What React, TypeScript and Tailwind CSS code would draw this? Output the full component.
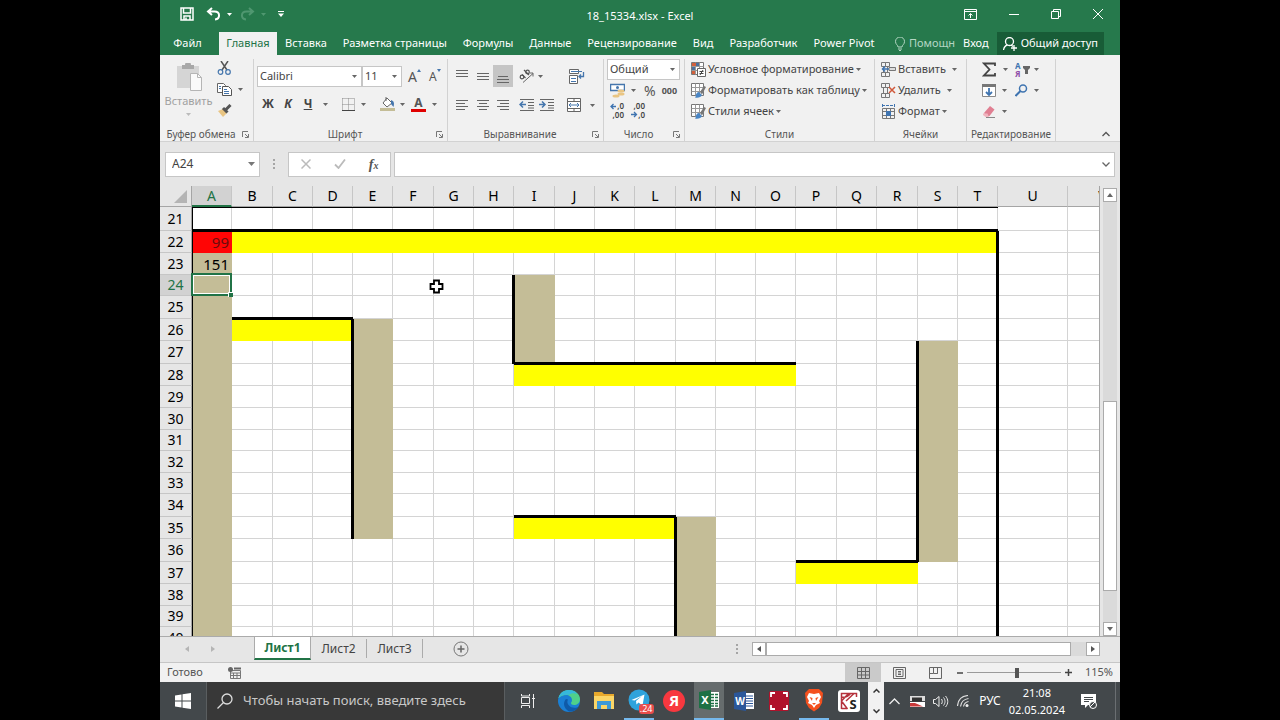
import React from 'react';

type Children = { children?: React.ReactNode };

const COLUMNS = 'ABCDEFGHIJKLMNOPQRSTUV'.split('');
const WIDE_COLUMNS = 'BFILPR';

const ROWS = [
  { n: 21, h: 'h-6' },
  { n: 22, h: 'h-[22px]' },
  { n: 23, h: 'h-[22px]' },
  { n: 24, h: 'h-[21px]' },
  { n: 25, h: 'h-[23px]' },
  { n: 26, h: 'h-[22px]' },
  { n: 27, h: 'h-[23px]' },
  { n: 28, h: 'h-[22px]' },
  { n: 29, h: 'h-[22px]' },
  { n: 30, h: 'h-[22px]' },
  { n: 31, h: 'h-[21px]' },
  { n: 32, h: 'h-[22px]' },
  { n: 33, h: 'h-[21px]' },
  { n: 34, h: 'h-[23px]' },
  { n: 35, h: 'h-[22px]' },
  { n: 36, h: 'h-[23px]' },
  { n: 37, h: 'h-[22px]' },
  { n: 38, h: 'h-[22px]' },
  { n: 39, h: 'h-[21px]' },
  { n: 40, h: 'h-[22px]' },
];

// [from column, to column, from row, to row]
type Range = [string, string, number, number];

const YELLOW: Range[] = [
  ['B', 'T', 22, 22],
  ['B', 'D', 26, 26],
  ['I', 'O', 28, 28],
  ['I', 'L', 35, 35],
  ['P', 'R', 37, 37],
];
const TAN: Range[] = [
  ['A', 'A', 23, 40],
  ['E', 'E', 26, 35],
  ['I', 'I', 24, 27],
  ['S', 'S', 27, 36],
  ['M', 'M', 35, 40],
];
const TOP_WALLS: Range[] = [['A', 'A', 22, 22], ...YELLOW];
const LEFT_WALLS: Range[] = [['U', 'U', 22, 40], ...TAN.slice(1)];

const inside = (ranges: Range[], col: string, row: number) =>
  ranges.some(([c1, c2, r1, r2]) => col >= c1 && col <= c2 && row >= r1 && row <= r2);

const fillClass = (col: string, row: number) => {
  if (col === 'A' && row === 22) return 'border-[#ff0505] bg-[#ff0505]';
  if (inside(YELLOW, col, row)) return 'border-[#ffff00] bg-[#ffff00]';
  if (inside(TAN, col, row)) return 'border-[#c4bd97] bg-[#c4bd97]';
  return 'border-[#d4d4d4] bg-white';
};

// Thick lines straddle the cell edge, so they are laid over both neighbours
const Walls = ({ col, row }: { col: string; row: number }) => (
  <>
    {inside(TOP_WALLS, col, row) && <span className="absolute -top-0.5 -right-px left-0 z-10 h-[3px] bg-black" />}
    {inside(LEFT_WALLS, col, row) && <span className="absolute top-0 -bottom-px -left-0.5 z-10 w-[3px] bg-black" />}
    {col === 'A' && <span className="absolute top-0 -bottom-px left-0 w-px bg-black" />}
    {row === 21 && col <= 'T' && <span className="absolute top-0 -right-px left-0 h-px bg-black" />}
  </>
);

const Svg = ({ w = 16, h = 16, className = '', children }: Children & { w?: number; h?: number; className?: string }) => (
  <svg width={w} height={h} viewBox={`0 0 ${w} ${h}`} fill="none" className={`shrink-0 ${className}`} aria-hidden="true">
    {children}
  </svg>
);

const Caret = ({ className = 'text-[#666]' }: { className?: string }) => (
  <Svg w={5} h={3} className={className}>
    <path d="M0 0h5L2.5 3z" fill="currentColor" />
  </Svg>
);

const Btn = ({ label, className = '', children }: Children & { label: string; className?: string }) => (
  <button type="button" aria-label={label} className={`flex shrink-0 items-center justify-center ${className}`}>
    {children}
  </button>
);

/* ---------- Title bar ---------- */

const TitleBar = () => (
  <header className="grid h-8 shrink-0 grid-cols-[1fr_auto_1fr] items-center bg-[#26794c] text-white">
    <div className="flex items-center pb-1 pl-5">
      <Btn label="Сохранить">
        <Svg w={14} h={14}>
          <path d="M1 1h12v12H1zM3.500 1v5h7V1M4 13V9h6v4M6 10.500v2" stroke="currentColor" strokeWidth="1.500" />
        </Svg>
      </Btn>
      <Btn label="Отменить" className="ml-3 gap-1.5">
        <Svg w={15} h={14}>
          <path d="M6 1 2 4.500 6 8M2 4.500h6.500c6 0 6 7.500.500 8" stroke="currentColor" strokeWidth="2" />
        </Svg>
        <Caret className="text-white" />
      </Btn>
      <Btn label="Повторить" className="ml-2 gap-1.5">
        <Svg w={15} h={14} className="text-[#4f9770]">
          <path d="m9 1 4 3.500L9 8M13 4.500H6.500c-6 0-6 7.500-.500 8" stroke="currentColor" strokeWidth="2" />
        </Svg>
        <Caret className="text-[#4f9770]" />
      </Btn>
      <Btn label="Настройка панели" className="ml-3">
        <Svg w={6} h={6}>
          <path d="M0 .5h6" stroke="currentColor" />
          <path d="M0 2.500h6L3 6z" fill="currentColor" />
        </Svg>
      </Btn>
    </div>
    <h1 className="text-[11px]">18_15334.xlsx - Excel</h1>
    <div className="flex items-center justify-end gap-8 pr-[17px] pb-1">
      <Btn label="Параметры ленты">
        <Svg w={13} h={11}>
          <path d="M.500.500h12v10H.500zM.500 2.500h12M6.500 9V5M4.500 6.500l2-2 2 2" stroke="currentColor" />
        </Svg>
      </Btn>
      <Btn label="Свернуть">
        <Svg w={10} h={11}>
          <path d="M0 5.500h10" stroke="currentColor" />
        </Svg>
      </Btn>
      <Btn label="Окно">
        <Svg w={10} h={10}>
          <path d="M.500 2.500h7v7h-7zM2.500 2.500v-2h7v7h-2" stroke="currentColor" />
        </Svg>
      </Btn>
      <Btn label="Закрыть">
        <Svg w={10} h={10}>
          <path d="m0 0 10 10M10 0 0 10" stroke="currentColor" />
        </Svg>
      </Btn>
    </div>
  </header>
);

const TABS = ['Вставка', 'Разметка страницы', 'Формулы', 'Данные', 'Рецензирование', 'Вид', 'Разработчик', 'Power Pivot'];

const RibbonTabs = () => (
  <nav className="flex h-[23px] shrink-0 items-stretch bg-[#26794c] pr-4 text-[11px] whitespace-nowrap text-white">
    <button type="button" className="w-[59px] shrink-0 pr-1">Файл</button>
    <button type="button" className="w-[58px] shrink-0 bg-[#f1f1f1] text-[#217346]">Главная</button>
    {TABS.map((tab) => (
      <button type="button" key={tab} className="shrink-0 px-2">
        {tab}
      </button>
    ))}
    <div className="flex-1" />
    <button type="button" className="flex shrink-0 items-center gap-1 text-[#b4d6c3]">
      <Svg w={10} h={14}>
        <path d="M3 10c0-2-2.500-2.500-2.500-5.500a4.500 4.500 0 0 1 9 0C9.500 7.500 7 8 7 10zM3 12h4M4 13.500h2" stroke="currentColor" />
      </Svg>
      Помощн
    </button>
    <button type="button" className="shrink-0 px-2">Вход</button>
    <button type="button" className="flex shrink-0 items-center gap-1 bg-[#185c37] px-1.5">
      <Svg w={14} h={14}>
        <circle cx="6.500" cy="4.500" r="4" stroke="currentColor" strokeWidth="1.300" />
        <path d="M.500 13c.500-3 2-4.500 4-5M8 8l2 1.500M11 8v6M8 11h6" stroke="currentColor" strokeWidth="1.300" />
      </Svg>
      Общий доступ
    </button>
  </nav>
);

/* ---------- Ribbon ---------- */

const Group = ({ title, launcher, className, children }: Children & { title: string; launcher?: boolean; className: string }) => (
  <section className={`mt-1 flex shrink-0 flex-col border-r border-[#d2d2d2] ${className}`}>
    <div className="h-[69px]">{children}</div>
    <div className="flex h-3 items-center">
      <h2 className="flex-1 text-center text-[10px] whitespace-nowrap text-[#555]">{title}</h2>
      {launcher && (
        <Btn label={`${title}: параметры`} className="mr-1">
          <Svg w={7} h={7}>
            <path d="M.500 6V.500H6M3 3l3 3M6.500 3v3.500H3" stroke="#777" />
          </Svg>
        </Btn>
      )}
    </div>
  </section>
);

const Divider = () => <span className="h-5 w-px bg-[#d9d9d9]" />;

const Lines = ({ rows }: { rows: number[][] }) => (
  <Svg w={14} h={14}>
    {rows.map(([x, y, w]) => (
      <path key={y} d={`M${x} ${y}.5h${w}`} stroke="#666" />
    ))}
  </Svg>
);

const Clipboard = () => (
  <Group title="Буфер обмена" launcher className="w-[94px]">
    <div className="flex">
      <button type="button" className="flex w-[57px] flex-col items-center pt-1 text-[11px] leading-4 text-[#a0a0a0]">
        <Svg w={28} h={28} className="mb-0.5">
          <path d="M2 3h22v22H2z" fill="#d5d5d5" />
          <path d="M7 2h3a3 3 0 0 1 6 0h3v4H7z" fill="#a8a8a8" />
          <path d="M15.500 10.500h7l4 4v13h-11z" fill="#fafafa" stroke="#b5b5b5" />
          <path d="M22.500 10.500v4h4" stroke="#b5b5b5" />
        </Svg>
        Вставить
        <Caret className="mt-1 text-[#bbb]" />
      </button>
      <div className="flex flex-col items-start gap-2 pt-[2px]">
        <Btn label="Вырезать">
          <Svg w={15} h={14}>
            <path d="m4 0 6 9M11 0 5 9" stroke="#555" strokeWidth="1.500" />
            <circle cx="3.500" cy="11" r="2.300" stroke="#4576ad" strokeWidth="1.200" />
            <circle cx="11" cy="11" r="2.300" stroke="#4576ad" strokeWidth="1.200" />
          </Svg>
        </Btn>
        <Btn label="Копировать" className="gap-1.5">
          <Svg w={15} h={13}>
            <path d="M.500.500h6l2 2v7h-8z" fill="#fff" stroke="#666" />
            <path d="M5.500 3.500h6l3 3v6h-9z" fill="#fff" stroke="#555" />
            <path d="M2 3.500h2M2 5.500h2M7 6.500h3M7 8.500h5M7 10.500h5" stroke="#4576ad" />
          </Svg>
          <Caret />
        </Btn>
        <Btn label="Формат по образцу">
          <Svg w={15} h={13}>
            <path d="m1 7 5-2 4 4-4 4z" fill="#e9c583" />
            <path d="m6 4 4.500 4.500M9 5.500 13.500 1" stroke="#555" strokeWidth="3" />
          </Svg>
        </Btn>
      </div>
    </div>
  </Group>
);

const FontGroup = () => (
  <Group title="Шрифт" launcher className="w-[194px]">
    <div className="flex items-center pt-[7px] pl-[3px] text-[11px] text-[#444]">
      <label className="flex h-[21px] w-[105px] items-center border border-[#c6c6c6] bg-white pr-1">
        <input aria-label="Шрифт" defaultValue="Calibri" className="w-full min-w-0 pl-[2px] outline-none" />
        <Caret />
      </label>
      <label className="flex h-[21px] w-10 items-center border border-[#c6c6c6] bg-white pr-1">
        <input aria-label="Размер" defaultValue="11" className="w-full min-w-0 pl-[2px] outline-none" />
        <Caret />
      </label>
      <Btn label="Увеличить" className="ml-1.5 items-start text-[14px] leading-5 text-[#555]">
        A
        <Svg w={4} h={8}>
          <path d="M0 5h4L2 2z" fill="#4576ad" />
        </Svg>
      </Btn>
      <Btn label="Уменьшить" className="ml-2 items-start text-[12px] leading-5 text-[#555]">
        A
        <Svg w={4} h={8}>
          <path d="M0 2h4L2 5z" fill="#4576ad" />
        </Svg>
      </Btn>
    </div>
    <div className="flex items-center pt-2 pl-[7px] text-[12px] text-[#444]">
      <button type="button" className="w-[14px] font-bold">Ж</button>
      <button type="button" className="ml-1.5 w-[14px] font-bold italic">К</button>
      <button type="button" className="ml-1.5 w-[14px] font-bold underline">Ч</button>
      <Btn label="Подчеркивание" className="ml-2"><Caret /></Btn>
      <span className="mx-[7px]"><Divider /></span>
      <Btn label="Границы" className="gap-1.5">
        <Svg w={13} h={13}>
          <path d="M.5.5h12M.5 6.500h12M.5.5v12M6.500.5v12M12.500.5v12" stroke="#888" strokeDasharray="1 1" />
          <path d="M0 12.500h13" stroke="#444" />
        </Svg>
        <Caret />
      </Btn>
      <span className="mx-[7px]"><Divider /></span>
      <Btn label="Заливка" className="gap-1">
        <Svg w={16} h={16}>
          <path d="m7 2 5 5-5 4-4-4z" fill="#fff" stroke="#666" />
          <path d="M6 5V1" stroke="#666" />
          <path d="M11 4c3 1 3.500 3 2.500 7L11 8z" fill="#4576ad" />
          <path d="M0 12h15v3H0z" fill="#c4bd97" />
        </Svg>
        <Caret />
      </Btn>
      <Btn label="Цвет текста" className="ml-1.5 gap-1.5">
        <span className="w-[15px] border-b-3 border-[#e00000] text-center text-[12px] leading-3 font-bold text-[#555]">А</span>
        <Caret />
      </Btn>
    </div>
  </Group>
);

const AlignGroup = () => (
  <Group title="Выравнивание" launcher className="w-[156px]">
    <div className="flex items-center pt-1.5 pl-1">
      <Btn label="По верхнему краю" className="h-[22px] w-5">
        <Lines rows={[[1, 1, 12], [1, 4, 12], [1, 7, 12]]} />
      </Btn>
      <Btn label="По середине" className="h-[22px] w-[21px]">
        <Lines rows={[[1, 4, 12], [1, 7, 12], [1, 10, 12]]} />
      </Btn>
      <Btn label="По нижнему краю" className="h-[22px] w-5 bg-[#c5c5c5]">
        <Lines rows={[[2, 7, 10], [1, 10, 12], [1, 13, 12]]} />
      </Btn>
      <Btn label="Ориентация" className="ml-1.5 gap-1">
        <Svg w={15} h={14}>
          <path d="m4 13.500 10-9M10.500 4h3.500v3.500" stroke="#666" />
          <circle cx="3" cy="8" r="1.800" stroke="#555" strokeWidth="1.200" />
          <path d="m3 5.500 3.500 3.500M5 1l5 5" stroke="#555" strokeWidth="1.200" />
          <circle cx="8.500" cy="3" r="1.800" stroke="#555" strokeWidth="1.200" />
        </Svg>
        <Caret />
      </Btn>
      <Btn label="Перенести текст" className="ml-[26px]">
        <Svg w={16} h={15}>
          <path d="M.5.5h9v4h-9zM.5 6.500h8v8h-8z" fill="#fff" stroke="#666" />
          <path d="M2 2.500h11M2 9.500h5M2 12.500h5" stroke="#4576ad" />
          <path d="M14.500 3v4.500H10M12 5.500l-2 2 2 2" stroke="#4576ad" strokeWidth="1.300" />
        </Svg>
      </Btn>
    </div>
    <div className="flex items-center pt-2 pl-1">
      <Btn label="По левому краю" className="h-5 w-5">
        <Lines rows={[[1, 2, 12], [1, 5, 9], [1, 8, 12], [1, 11, 9]]} />
      </Btn>
      <Btn label="По центру" className="h-5 w-[21px]">
        <Lines rows={[[1, 2, 12], [3, 5, 8], [1, 8, 12], [3, 11, 8]]} />
      </Btn>
      <Btn label="По правому краю" className="h-5 w-5">
        <Lines rows={[[1, 2, 12], [4, 5, 9], [1, 8, 12], [4, 11, 9]]} />
      </Btn>
      <Btn label="Уменьшить отступ" className="ml-1.5">
        <Svg w={16} h={14}>
          <path d="M1 1.500h14M9 4.500h6M9 7.500h6M1 12.500h14M9 10h6" stroke="#666" />
          <path d="M7 6.500H1M4 3.500l-3 3 3 3" stroke="#4576ad" strokeWidth="1.500" />
        </Svg>
      </Btn>
      <Btn label="Увеличить отступ" className="ml-1">
        <Svg w={16} h={14}>
          <path d="M1 1.500h14M9 4.500h6M9 7.500h6M1 12.500h14M9 10h6" stroke="#666" />
          <path d="M0 6.500h6M3 3.500l3 3-3 3" stroke="#4576ad" strokeWidth="1.500" />
        </Svg>
      </Btn>
      <span className="mx-1.5"><Divider /></span>
      <Btn label="Объединить" className="gap-2">
        <Svg w={15} h={14}>
          <path d="M.5.5h13v13H.5zM.5 3.500h13M.5 10.500h13M7 .5v3M7 10.500v3" fill="#fff" stroke="#666" />
          <path d="M2 7h10M4 5 2 7l2 2M10 5l2 2-2 2" stroke="#4576ad" />
        </Svg>
        <Caret />
      </Btn>
    </div>
  </Group>
);

const NumberGroup = () => (
  <Group title="Число" launcher className="w-[81px]">
    <label className="ml-[3px] flex h-[21px] w-[73px] items-center border border-[#c6c6c6] bg-white pr-1 text-[11px] text-[#444]">
      <select aria-label="Формат чисел" className="w-full appearance-none bg-transparent pl-[2px] outline-none">
        <option>Общий</option>
      </select>
      <Caret />
    </label>
    <div className="flex h-[21px] items-center pl-1.5 text-[#555]">
      <Btn label="Денежный формат" className="gap-1.5">
        <Svg w={15} h={15}>
          <path d="M.5 1.500h14v6H.5z" fill="#fff" stroke="#4576ad" strokeWidth="1.500" />
          <circle cx="7.500" cy="4.500" r="1.500" fill="#4576ad" />
          <ellipse cx="11" cy="8" rx="3.500" ry="1.500" fill="#e9c583" />
          <ellipse cx="11" cy="11" rx="3.500" ry="1.500" fill="#e9c583" />
          <ellipse cx="6" cy="13" rx="3.500" ry="1.500" fill="#e9c583" />
        </Svg>
        <Caret />
      </Btn>
      <button type="button" className="ml-2 text-[14px]">%</button>
      <button type="button" className="ml-1.5 text-[9px] font-bold">000</button>
    </div>
    <div className="flex items-center gap-1.5 pl-1.5 text-[#444]">
      <Btn label="Увеличить разрядность">
        <Svg w={15} h={18}>
          <path d="M6 5.500H1M3.500 3 1 5.500 3.500 8" stroke="#3f74b0" strokeWidth="1.300" />
          <text x="14" y="8" textAnchor="end" fontSize="8" fontWeight="600" fill="#444">,0</text>
          <text x="14" y="17" textAnchor="end" fontSize="8" fontWeight="600" fill="#444">,00</text>
        </Svg>
      </Btn>
      <Btn label="Уменьшить разрядность">
        <Svg w={15} h={18}>
          <path d="M0 13.500h5M3 11l2.500 2.500L3 16" stroke="#3f74b0" strokeWidth="1.300" />
          <text x="14" y="8" textAnchor="end" fontSize="8" fontWeight="600" fill="#444">,00</text>
          <text x="14" y="17" textAnchor="end" fontSize="8" fontWeight="600" fill="#444">,0</text>
        </Svg>
      </Btn>
    </div>
  </Group>
);

const TableIcon = ({ brush }: { brush?: boolean }) => (
  <Svg w={15} h={15}>
    <path d="M.5.5h12v12H.5z" fill="#fff" stroke="#777" />
    <path d="M.5 4.500h12M.5 8.500h12M4.500.5v12M8.500.5v12" stroke="#999" />
    {brush ? (
      <>
        <path d="M4 14.500c1.500-1 0-5 4-5.500l3 3c-1 2.500-4 3-7 2.500z" fill="#4a86c5" />
        <path d="m9 9 4-6 2 1-4 7.500z" fill="#777" />
      </>
    ) : (
      <>
        <path d="M1 1h4v3H1zM1 9h3v3H1z" fill="#d2603c" />
        <path d="M5 1h3v3H5zM1 5h3v3H1z" fill="#4a6f9c" />
        <path d="M6.500 6.500h8v8h-8z" fill="#fff" stroke="#666" />
        <path d="M8.500 9.500h4M8.500 11.500h4M12 8l-3 5" stroke="#444" />
      </>
    )}
  </Svg>
);

const StylesGroup = () => (
  <Group title="Стили" className="w-[190px]">
    {['Условное форматирование', 'Форматировать как таблицу', 'Стили ячеек'].map((label, i) => (
      <button type="button" key={label} className="flex h-[21px] items-center gap-[2px] pl-1.5 text-[11px] whitespace-nowrap text-[#444]">
        <TableIcon brush={i > 0} />
        {label}
        <Caret />
      </button>
    ))}
  </Group>
);

const CELL_ACTIONS = [
  { label: 'Вставить', caret: 'ml-1' },
  { label: 'Удалить', caret: 'ml-1' },
  { label: 'Формат', caret: '' },
];

const CellsGroup = () => (
  <Group title="Ячейки" className="w-[92px]">
    {CELL_ACTIONS.map(({ label, caret }, i) => (
      <button type="button" key={label} className="flex h-[21px] items-center gap-[2px] pl-1.5 text-[11px] whitespace-nowrap text-[#444]">
        <Svg w={15} h={15}>
          {i < 2 && <path d="M.5.5h4v4h-4zM4.500.5h4v4h-4zM.5 10.500h4v4h-4zM4.500 10.500h4v4h-4zM2.500 4.500v6M6.500 4.500v6" stroke="#777" />}
          {i === 0 && <path d="M8 5.500h6.500v3H8z" fill="#ddd" stroke="#777" />}
          {i === 0 && <path d="M8 7H1M4 4.500 1.500 7 4 9.500" stroke="#3f74b0" strokeWidth="1.500" />}
          {i === 1 && <path d="m8 4 6 6M14 4l-6 6" stroke="#d0583a" strokeWidth="1.500" />}
          {i === 2 && (
            <>
              <path d="M1.500 4.500h12v10h-12zM1.500 7.500h12M1.500 11.500h12M5.500 4.500v10M9.500 4.500v10" stroke="#777" />
              <path d="M5 7h5v5H5z" fill="#3f74b0" />
              <path d="M1 1.500h13M1.500 0v3M13.500 0v3" stroke="#3f74b0" strokeDasharray="3 1" />
            </>
          )}
        </Svg>
        {label}
        <span className={caret}><Caret /></span>
      </button>
    ))}
  </Group>
);

const EditGroup = () => (
  <Group title="Редактирование" className="w-[89px]">
    <div className="grid grid-cols-[33px_auto] pl-[15px]">
      <Btn label="Сумма" className="h-[21px] justify-start gap-1.5">
        <Svg w={15} h={15}>
          <path d="M13 4V1.500H2l5.500 6-5.500 6h11V11" stroke="#444" strokeWidth="1.800" />
        </Svg>
        <Caret />
      </Btn>
      <Btn label="Сортировка и фильтр" className="h-[21px] justify-start gap-1">
        <Svg w={15} h={17}>
          <text x="0" y="8" fontSize="8" fontWeight="bold" fill="#3f74b0">А</text>
          <text x="0" y="16" fontSize="8" fontWeight="bold" fill="#8e4fa8">Я</text>
          <path d="M8 5h7v2l-2 2v4h-3V9L8 7z" fill="#666" />
        </Svg>
        <Caret />
      </Btn>
      <Btn label="Заполнить" className="h-[21px] justify-start gap-1.5">
        <Svg w={14} h={15}>
          <path d="M.5 1.500h13v12H.5z" fill="#fff" stroke="#888" />
          <path d="M0 1h14v3H0z" fill="#777" />
          <path d="M7 5v7M4 9l3 3 3-3" stroke="#3f74b0" strokeWidth="1.800" />
        </Svg>
        <Caret />
      </Btn>
      <Btn label="Найти" className="h-[21px] justify-start gap-1.5">
        <Svg w={13} h={13}>
          <circle cx="8" cy="4.500" r="3.500" stroke="#3f74b0" strokeWidth="1.500" />
          <path d="m5.500 7-5 5" stroke="#3f74b0" strokeWidth="2" />
        </Svg>
        <Caret />
      </Btn>
      <Btn label="Очистить" className="h-[21px] justify-start gap-1.5">
        <Svg w={14} h={13}>
          <path d="m2 8 6-7 4.500 3.500L7.500 11H4z" fill="#e07f92" />
          <path d="M1 8.500v1.500l2.500 2h3.500L5.500 8.500z" fill="#f0b5bf" />
          <path d="M4 12.500h9" stroke="#888" />
        </Svg>
        <Caret />
      </Btn>
    </div>
  </Group>
);

const Ribbon = () => (
  <div className="flex h-[87px] shrink-0 border-b border-[#d2d2d2] bg-[#f1f1f1]">
    <Clipboard />
    <FontGroup />
    <AlignGroup />
    <NumberGroup />
    <StylesGroup />
    <CellsGroup />
    <EditGroup />
    <Btn label="Свернуть ленту" className="mr-2.5 mb-1 ml-auto self-end">
      <Svg w={8} h={6}>
        <path d="m.5 5 3.500-3.500L7.500 5" stroke="#555" strokeWidth="1.300" />
      </Svg>
    </Btn>
  </div>
);

const Dots = () => (
  <Svg w={2} h={10}>
    <path d="M0 0h2v2H0zM0 4h2v2H0zM0 8h2v2H0z" fill="#a5a5a5" />
  </Svg>
);

const FormulaBar = () => (
  <div className="flex h-11 shrink-0 items-center bg-[#e6e6e6] px-[5px]">
    <label className="flex h-[25px] w-[95px] items-center border border-[#c6c6c6] bg-white pr-1 text-[12px] text-[#444]">
      <input aria-label="Поле имени" defaultValue="A24" className="w-full min-w-0 pl-1.5 outline-none" />
      <Svg w={7} h={4}>
        <path d="M0 0h7L3.500 4z" fill="#777" />
      </Svg>
    </label>
    <span className="mx-[13px]"><Dots /></span>
    <div className="flex h-[25px] w-[103px] items-center justify-around border border-[#c6c6c6] bg-white">
      <Btn label="Отмена">
        <Svg w={10} h={10}>
          <path d="m.5.5 9 9M9.500.5l-9 9" stroke="#bbb" strokeWidth="1.500" />
        </Svg>
      </Btn>
      <Btn label="Ввод">
        <Svg w={12} h={10}>
          <path d="m1 5.500 3.500 3.500L11 .5" stroke="#bbb" strokeWidth="1.800" />
        </Svg>
      </Btn>
      <button type="button" className="font-['Liberation_Serif',serif] text-[14px] font-bold text-[#555] italic">
        f<span className="text-[10px]">x</span>
      </button>
    </div>
    <label className="ml-[3px] flex h-[25px] flex-1 items-center border border-[#c6c6c6] bg-white pr-1">
      <input aria-label="Строка формул" className="w-full outline-none" />
      <Svg w={8} h={5}>
        <path d="m.5.5 3.500 3.500L7.500.5" stroke="#666" strokeWidth="1.300" />
      </Svg>
    </label>
  </div>
);

/* ---------- Sheet ---------- */

const Sheet = () => (
  <main className="flex min-h-0 flex-1 bg-[#e6e6e6]">
    <div className="min-w-0 flex-1 overflow-hidden border-r border-[#a5a5a5] bg-white">
      <table className="w-full min-w-[978px] table-fixed border-separate border-spacing-0 text-[15px] text-black">
        <colgroup>
          <col className="w-8" />
          {COLUMNS.map((c) => (
            <col key={c} className={c === 'V' ? '' : c === 'U' ? 'w-[70px]' : WIDE_COLUMNS.includes(c) ? 'w-[41px]' : 'w-10'} />
          ))}
        </colgroup>
        <thead>
          <tr className="h-[21px]">
            <th className="border-r border-b border-[#a5a5a5] bg-[#e6e6e6] p-0">
              <Svg w={13} h={13} className="ml-auto mr-1">
                <path d="M13 0v13H0z" fill="#b4b4b4" />
              </Svg>
            </th>
            {COLUMNS.map((c) => (
              <th
                key={c}
                scope="col"
                className={
                  c === 'A'
                    ? 'border-r border-b-2 border-r-[#c6c6c6] border-b-[#217346] bg-[#d2d2d2] p-0 text-[14px] leading-4 font-normal text-[#217346]'
                    : 'border-r border-b border-r-[#c6c6c6] border-b-[#a5a5a5] bg-[#e6e6e6] p-0 text-[14px] leading-4 font-normal'
                }
              >
                {c}
              </th>
            ))}
          </tr>
        </thead>
        <tbody>
          {ROWS.map(({ n, h }) => (
            <tr key={n} className={h}>
              <th
                scope="row"
                className={
                  n === 24
                    ? 'border-r border-b border-r-[#217346] border-b-[#c6c6c6] bg-[#d2d2d2] p-0 text-[14px] leading-4 font-normal text-[#217346]'
                    : 'border-r border-b border-r-[#a5a5a5] border-b-[#c6c6c6] bg-[#e6e6e6] p-0 text-[14px] leading-4 font-normal'
                }
              >
                {n}
              </th>
              {COLUMNS.map((c) => (
                <td key={c} className={`relative border-r border-b p-0 pr-[2px] text-right leading-4 ${fillClass(c, n)}`}>
                  <Walls col={c} row={n} />
                  {c === 'A' && n === 22 && <span className="text-[#6a0c0c]">99</span>}
                  {c === 'A' && n === 23 && '151'}
                  {c === 'A' && n === 24 && (
                    <span className="absolute -inset-x-px -top-0.5 -bottom-px z-10 border-2 border-[#217346] shadow-[inset_0_0_0_1px_#fff]">
                      <span className="absolute -right-[3px] -bottom-[3px] size-[5px] border-t border-l border-white bg-[#217346]" />
                    </span>
                  )}
                  {c === 'F' && n === 24 && (
                    <Svg w={15} h={15} className="absolute top-1 left-9 z-10">
                      <path d="M5 1.500h5V5h3.500v5H10v3.500H5V10H1.500V5H5z" fill="#fff" stroke="#000" strokeWidth="1.800" />
                    </Svg>
                  )}
                </td>
              ))}
            </tr>
          ))}
        </tbody>
      </table>
    </div>
    <div className="flex w-5 shrink-0 flex-col items-center pt-0.5">
      <Btn label="Вверх" className="size-[14px] border border-[#ababab] bg-white">
        <Svg w={6} h={4}><path d="M0 4h6L3 0z" fill="#666" /></Svg>
      </Btn>
      <div className="flex w-[14px] flex-1 flex-col bg-[#dadada]">
        <div className="flex-[200]" />
        <div className="flex-[190] border border-[#ababab] bg-white" />
        <div className="flex-[31]" />
      </div>
      <Btn label="Вниз" className="size-[14px] border border-[#ababab] bg-white">
        <Svg w={6} h={4}><path d="M0 0h6L3 4z" fill="#666" /></Svg>
      </Btn>
    </div>
  </main>
);

const SheetTabs = () => (
  <div className="flex h-[26px] shrink-0 items-start border-t border-[#ababab] bg-[#e6e6e6] text-[12px] text-[#444]">
    <div className="flex h-6 w-[94px] items-center gap-[22px] pl-[25px]">
      <Btn label="Предыдущий лист"><Svg w={4} h={6}><path d="M4 0v6L0 3z" fill="#b5b5b5" /></Svg></Btn>
      <Btn label="Следующий лист"><Svg w={4} h={6}><path d="M0 0v6l4-3z" fill="#b5b5b5" /></Svg></Btn>
    </div>
    <button type="button" className="h-[23px] w-[57px] border-x border-b-2 border-x-[#ababab] border-b-[#217346] bg-white font-bold text-[#217346]">
      Лист1
    </button>
    <button type="button" className="my-0.5 h-[19px] w-14 border-r border-[#ababab]">Лист2</button>
    <button type="button" className="my-0.5 h-[19px] w-14 border-r border-[#ababab]">Лист3</button>
    <Btn label="Новый лист" className="ml-[30px] h-6">
      <Svg w={16} h={16}>
        <circle cx="8" cy="8" r="7" stroke="#777" />
        <path d="M8 4.500v7M4.500 8h7" stroke="#666" strokeWidth="1.500" />
      </Svg>
    </Btn>
    <div className="ml-auto flex h-6 w-2/5 items-center pr-5">
      <Dots />
      <Btn label="Влево" className="ml-[14px] size-[14px] border border-[#ababab] bg-white">
        <Svg w={4} h={6}><path d="M4 0v6L0 3z" fill="#555" /></Svg>
      </Btn>
      <div className="h-[14px] flex-1 border border-[#ababab] bg-white" />
      <div className="h-[14px] w-[15px] bg-[#dadada]" />
      <Btn label="Вправо" className="size-[14px] border border-[#ababab] bg-white">
        <Svg w={4} h={6}><path d="M0 0v6l4-3z" fill="#555" /></Svg>
      </Btn>
    </div>
  </div>
);

const StatusBar = () => (
  <footer className="flex h-5 shrink-0 items-center border-t border-[#c6c6c6] bg-[#f1f1f1] text-[11px] text-[#555]">
    <span className="pl-[7px]">Готово</span>
    <Btn label="Запись макроса" className="ml-[25px]">
      <Svg w={13} h={12}>
        <path d="M2.500 3.500h10v8h-10zM2.500 6h10M5.500 6v5.500M9 6v5.500M2.500 8.500h10" stroke="#777" />
        <circle cx="2.500" cy="2.500" r="2.500" fill="#666" />
        <path d="M6 1.500h7" stroke="#666" strokeWidth="2" />
      </Svg>
    </Btn>
    <div className="ml-auto flex h-full items-center">
      <Btn label="Обычный" className="h-full w-9 bg-[#cacaca]">
        <Svg w={13} h={12}>
          <path d="M.5.5h12v11H.5zM.5 4.500h12M.5 8h12M4.500.5v11M8.500.5v11" stroke="#666" />
        </Svg>
      </Btn>
      <Btn label="Разметка страницы" className="w-9">
        <Svg w={13} h={12}>
          <path d="M.5.5h12v11H.5zM3 2.500h7v7H3zM5 4.500h3M5 6h3M5 7.500h3" stroke="#666" />
        </Svg>
      </Btn>
      <Btn label="Страничный режим" className="w-9">
        <Svg w={13} h={12}>
          <path d="M.5.5h12v11H.5zM4.500.5v6h4v-6M.5 6.500h4M8.500 6.500v-6" stroke="#666" />
        </Svg>
      </Btn>
      <Btn label="Мельче" className="ml-1"><Svg w={6} h={6}><path d="M0 3h6" stroke="#444" strokeWidth="1.500" /></Svg></Btn>
      <input
        type="range"
        aria-label="Масштаб"
        min={0}
        max={100}
        defaultValue={53}
        className="mx-1 h-3 w-[94px] appearance-none bg-[linear-gradient(#9a9a9a,#9a9a9a)] bg-[length:100%_1px] bg-center bg-no-repeat [&::-webkit-slider-thumb]:h-[10px] [&::-webkit-slider-thumb]:w-1 [&::-webkit-slider-thumb]:appearance-none [&::-webkit-slider-thumb]:bg-[#555]"
      />
      <Btn label="Крупнее"><Svg w={7} h={7}><path d="M0 3.500h7M3.500 0v7" stroke="#444" strokeWidth="1.500" /></Svg></Btn>
      <span className="w-12 pr-[7px] text-right">115%</span>
    </div>
  </footer>
);

/* ---------- Taskbar ---------- */

const APPS = [
  {
    name: 'Edge',
    state: '',
    icon: (
      <>
        <circle cx="12" cy="12" r="11" fill="#1a7fd4" />
        <path d="M1.500 9C3 3 8 1 12 1c6 0 11 4 11 9 0 4-3 6-6 6-2 0-3-1-3-2 0-1 1-1 1-3 0-3-3-5-6-5-3 0-6 1.500-7.500 3z" fill="#4fd08a" />
        <path d="M1.500 9C3 3 8 1 12 1c4 0 6 1 8 4-3-1-6-1-8 1-4-.5-7.500 0-10.500 3z" fill="#36b8dc" />
        <path d="M9 10c-3 3-3 9 3 12.500 4 .5 8-1.500 10-5-3 2-8 1.500-10-1-2-2-2-4-1-6z" fill="#0f5aa8" />
      </>
    ),
  },
  {
    name: 'Проводник',
    state: '',
    icon: (
      <>
        <path d="M2 3h8l2 2h10v15H2z" fill="#e8a92c" />
        <path d="M2 7h20v13H2z" fill="#fbd667" />
        <path d="M5 12h14v8h-4v-4H9v4H5z" fill="#3d9ad8" />
      </>
    ),
  },
  {
    name: 'Telegram',
    state: 'border-b-2 border-[#76b9ed]',
    icon: (
      <>
        <circle cx="12" cy="12" r="10.500" fill="#2fa3dc" />
        <path d="m4.500 12 13-5.500-2 11-4-3-2 2-.5-3.500 6-5-7.500 4.500z" fill="#fff" />
      </>
    ),
  },
  {
    name: 'Яндекс',
    state: '',
    icon: (
      <>
        <circle cx="12" cy="12" r="11" fill="#f8383f" />
        <text x="12" y="17" textAnchor="middle" fontSize="15" fontWeight="bold" fill="#fff">Я</text>
      </>
    ),
  },
  {
    name: 'Excel',
    state: 'border-b-2 border-[#76b9ed] bg-[#666c6d]',
    icon: (
      <>
        <path d="M12 4h10v16H12z" fill="#fff" />
        <path d="M14 6.500h3M18 6.500h3M14 9.500h3M18 9.500h3M14 12.500h3M18 12.500h3M14 15.500h3M18 15.500h3M14 18h3M18 18h3" stroke="#1e7145" strokeWidth="1.500" />
        <path d="m2 4 12-2v20L2 20z" fill="#1e7145" />
        <text x="8" y="16" textAnchor="middle" fontSize="11" fontWeight="bold" fill="#fff">X</text>
      </>
    ),
  },
  {
    name: 'Word',
    state: '',
    icon: (
      <>
        <path d="M12 4h10v16H12z" fill="#fff" />
        <path d="M14 7h7M14 9.500h7M14 12h7M14 14.500h7M14 17h7" stroke="#2b579a" />
        <path d="m2 4 12-2v20L2 20z" fill="#2b579a" />
        <text x="8" y="16" textAnchor="middle" fontSize="10" fontWeight="bold" fill="#fff">W</text>
      </>
    ),
  },
  {
    name: 'Снимок экрана',
    state: '',
    icon: (
      <>
        <rect x="2" y="2" width="20" height="20" rx="2" fill="#b0122b" />
        <path d="M4 8V4h4M16 4h4v4M20 16v4h-4M8 20H4v-4" stroke="#fff" strokeWidth="1.800" />
      </>
    ),
  },
  {
    name: 'Brave',
    state: 'border-b-2 border-[#76b9ed]',
    icon: (
      <>
        <path d="m7 1-4 4 1 10 3 5 5 3.500 5-3.500 3-5 1-10-4-4z" fill="#f4501e" />
        <path d="m7 5 5 1 5-1 2 4-2 4 1 2-4 2-2 3-2-3-4-2 1-2-2-4z" fill="#fff" />
        <path d="m7.500 9 3 1-.5 3zM16.500 9l-3 1 .5 3zM10 15h4l-2 2z" fill="#f4501e" />
      </>
    ),
  },
  {
    name: 'KS',
    state: '',
    icon: (
      <>
        <rect x="1" y="1" width="22" height="22" rx="3" fill="#fff" />
        <path d="M4.500 20V4.500H19.500V8M4.500 12l7-7.500M4.500 12l6 8M4.500 8c4 1 7-1 9-3.500M9 12l8-7.500M4.500 19.500h6" stroke="#b5323c" strokeWidth="1.500" />
        <text x="16" y="20" textAnchor="middle" fontSize="13" fontWeight="bold" fill="#222">S</text>
      </>
    ),
  },
];

const Taskbar = () => (
  <div className="flex h-[38px] shrink-0 items-stretch bg-[#43484b] text-white">
    <Btn label="Пуск" className="w-[46px]">
      <Svg w={16} h={16}>
        <path d="M0 2.500 6.500 1.500v6H0zM7.500 1.300 16 0v7.500H7.500zM0 8.500h6.500v6L0 13.500zM7.500 8.500H16V16l-8.500-1.300z" fill="#fff" />
      </Svg>
    </Btn>
    <label className="flex w-[299px] items-center gap-2.5 border-x border-[#5a5e60] bg-[#383838] pl-2.5">
      <Svg w={16} h={16}>
        <circle cx="10" cy="6" r="5" stroke="#ddd" strokeWidth="1.300" />
        <path d="M6.500 9.500.5 15.500" stroke="#ddd" strokeWidth="1.300" />
      </Svg>
      <input
        aria-label="Поиск"
        placeholder="Чтобы начать поиск, введите здесь"
        className="w-full min-w-0 text-[13px] outline-none placeholder:text-[#c8c8c8]"
      />
    </label>
    <Btn label="Представление задач" className="w-[46px]">
      <Svg w={16} h={14}>
        <path d="M1.500 3.500h8v6h-8zM1.500 0v2h8V0M1.500 14v-2.500h8V14M13.500 0v14M12 4.500h3" stroke="#eee" />
      </Svg>
    </Btn>
    <div className="mr-0.5 flex">
      {APPS.map(({ name, state, icon }) => (
        <button type="button" key={name} aria-label={name} className="flex w-[35px] shrink-0 justify-center">
          <span className={`relative flex h-full w-[30px] items-center justify-center ${state}`}>
            <svg width="24" height="24" viewBox="0 0 24 24" fill="none" className="shrink-0" aria-hidden="true">
              {icon}
            </svg>
            {name === 'Telegram' && (
              <span className="absolute right-0 bottom-1 rounded-[3px] bg-[#e84c4c] px-px text-[9px] leading-[10px]">.24</span>
            )}
          </span>
        </button>
      ))}
    </div>
    <div className="flex w-4 flex-col items-center justify-between bg-[#f1f1f1] py-1.5">
      <Btn label="Прокрутить вверх"><Svg w={7} h={5}><path d="m.5 4.500 3-3 3 3" stroke="#333" strokeWidth="1.500" /></Svg></Btn>
      <Btn label="Прокрутить вниз"><Svg w={7} h={5}><path d="m.5.5 3 3 3-3" stroke="#333" strokeWidth="1.500" /></Svg></Btn>
    </div>
    <div className="flex flex-1 items-center justify-end">
      <Btn label="Скрытые значки" className="mr-2.5">
        <Svg w={11} h={7}><path d="m.5 6 5-5 5 5" stroke="#eee" strokeWidth="1.300" /></Svg>
      </Btn>
      <Btn label="Устройство" className="mr-2">
        <Svg w={15} h={13}>
          <path d="M0 1h15v5H0z" fill="#ddd" />
          <path d="M2 2.500h10v4H2z" fill="#333" />
          <path d="M0 7h15v5H0z" fill="#fff" />
          <path d="M0 8h5l8 3.500H0z" fill="#c93a3a" />
        </Svg>
      </Btn>
      <Btn label="Громкость" className="mr-2">
        <Svg w={16} h={13}>
          <path d="M.5 4.500h2l3.500-3v10l-3.500-3h-2zM8.500 4c1 1.500 1 3.500 0 5M10.500 2.500c2 2.500 2 5.500 0 8M12.500 1c3 3.500 3 7.500 0 11" stroke="#eee" />
        </Svg>
      </Btn>
      <Btn label="Сеть" className="mr-2.5">
        <Svg w={12} h={12}>
          <circle cx="10" cy="10.500" r="1.500" fill="#eee" />
          <path d="M.5 11C1 5 5 1 11 .5M3.500 11.500c.5-4 3.500-7.500 8-8M6.500 11.500C7 9 9 7 11.500 6.500" stroke="#ddd" strokeWidth="1.200" />
        </Svg>
      </Btn>
      <span className="text-[12px]">РУС</span>
      <div className="ml-2 text-center text-[11px] leading-[17px]">
        21:08
        <br />
        02.05.2024
      </div>
      <Btn label="Уведомления" className="ml-4">
        <Svg w={16} h={15}>
          <path d="M0 0h15v11H7l-3 3v-3H0z" fill="#fff" />
          <path d="M3 3.500h9M3 5.500h9M3 7.500h5" stroke="#43484b" />
          <circle cx="12" cy="11" r="3.500" fill="#43484b" stroke="#fff" />
          <path d="m9 13 5-5" stroke="#fff" />
        </Svg>
      </Btn>
      <span className="ml-[18px] h-full w-px bg-[#6b6f72]" />
      <span className="w-1" />
    </div>
  </div>
);

const App: React.FC = () => (
  <div className="min-h-screen bg-black px-[12.5%] font-['Noto_Sans',sans-serif]">
    <div className="flex h-screen flex-col overflow-hidden">
      <TitleBar />
      <RibbonTabs />
      <Ribbon />
      <FormulaBar />
      <Sheet />
      <SheetTabs />
      <StatusBar />
      <Taskbar />
    </div>
  </div>
);

export default App;
